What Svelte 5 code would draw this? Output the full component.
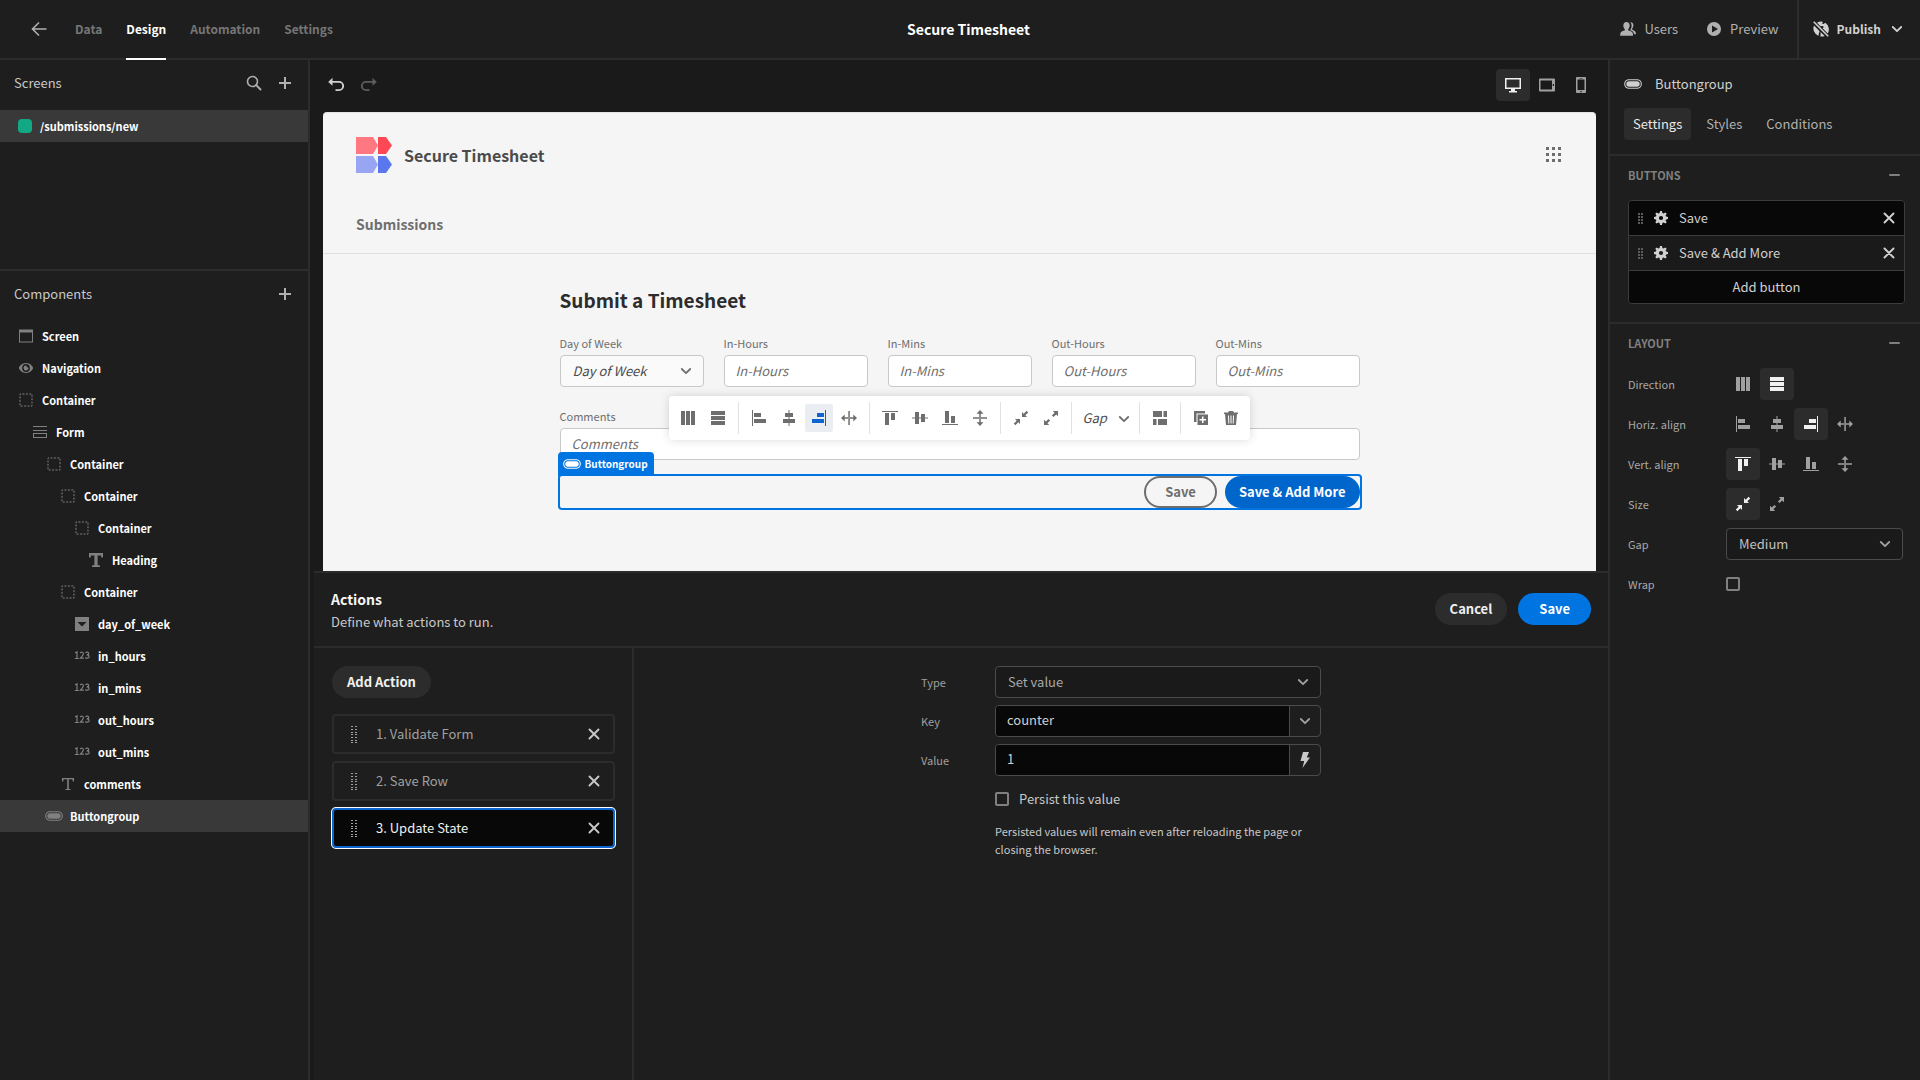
<script>
  const icons = {
    back: '<path d="M15.5 8H2M8 1.5 1.5 8 8 14.5" fill="none" stroke="currentColor" stroke-width="1.6"/>',
    search: '<circle cx="6.5" cy="6.5" r="5" fill="none" stroke="currentColor" stroke-width="1.6"/><path d="m10.2 10.2 4.3 4.3" stroke="currentColor" stroke-width="1.9" stroke-linecap="round"/>',
    plus: '<path d="M7 2h2v12H7zM2 7h12v2H2z"/>',
    minus: '<rect x="3" y="7" width="11" height="2" rx="1"/>',
    close: '<path d="m3.500 3.500 9 9m0-9-9 9" stroke="currentColor" stroke-width="1.900" stroke-linecap="round"/>',
    chevron: '<path d="m3.800 6 4.200 4.200L12.200 6" fill="none" stroke="currentColor" stroke-width="1.800" stroke-linecap="round" stroke-linejoin="round"/>',
    undo: '<path d="M4.500.8v3.100H11a5.100 5.100 0 0 1 0 10.200H7.500v-1.900H11a3.200 3.200 0 0 0 0-6.400H4.500v3L.2 4.900z"/>',
    redo: '<path d="M11.500.8v3.100H5a5.100 5.100 0 0 0 0 10.200h3.500v-1.900H5a3.200 3.200 0 0 1 0-6.400h6.500v3l4.300-3.900z"/>',
    users: '<path d="M6.500.9c2 0 3.200 1.500 3.200 3.600 0 1.500-.7 2.700-1.300 3.400-.5.700-.3 1.400.4 1.700 2.200.8 4.200 1.600 4.200 3.700v1.400H.2v-1.400c0-2.100 1.900-2.900 4-3.700.8-.3.900-1 .4-1.700-.6-.7-1.300-1.900-1.300-3.400C3.300 2.400 4.500.9 6.500.9z"/><path d="M10.200 1.200c1.700-.3 3.200 1 3.200 3.100 0 1.300-.5 2.300-1 3-.5.700-.3 1.400.3 1.700 1.800.8 3.200 1.600 3.200 3.600v.6h-1.800c-.3-2.200-2-3.300-4-4.100 1-1.300 1.500-2.700 1.500-4.600 0-1.300-.5-2.500-1.400-3.300z"/>',
    play: '<path fill-rule="evenodd" d="M8 1a7 7 0 1 1 0 14A7 7 0 0 1 8 1zM6 4.500v7l6-3.500z"/>',
    globe: '<path d="M4 1.700A7.600 7.600 0 0 1 8.400.4c1.600.1 1.300.9.900 1.600-.4.700.5 1.200 1.300.9.900-.3 1.300-1.200 2-.8a7.800 7.800 0 0 1 2.200 10.300L9.600 7.200c.6-.6 1.300-.9 1-1.500-.5-.9-2-.8-2.800-.2zM1 4.600l5.200 5.200c.5.600.3 1.300-.1 1.900-.4.800-.2 2.400-.8 3A7.700 7.700 0 0 1 1 4.600zm6.600 10.900c-.6-.8.100-1.900.1-2.700 0-.6-.3-1-.2-1.700l4.200 3.800a7.700 7.700 0 0 1-4.100.6z"/><path d="m.7.700 14.500 14.500" stroke="currentColor" stroke-width="1.600"/>',
    desktop: '<path fill-rule="evenodd" d="M0 1h16v11h-6v2h2v1.500H4V14h2v-2H0zm1.500 1.500v8h13v-8z"/>',
    tablet: '<path fill-rule="evenodd" d="M1 1.500h14a1 1 0 0 1 1 1v11a1 1 0 0 1-1 1H1a1 1 0 0 1-1-1v-11a1 1 0 0 1 1-1zm.5 2v9H13v-9zm12.300 3.500v2H15V7z"/>',
    phone: '<path fill-rule="evenodd" d="M4 0h8a1 1 0 0 1 1 1v14a1 1 0 0 1-1 1H4a1 1 0 0 1-1-1V1a1 1 0 0 1 1-1zm.5 2.500v10.500h7V2.500zM6.500.9v.7h3V.9zM7.300 14v1.200h1.400V14z"/>',
    grid: '<path d="M0 0h3v3H0zM6 0h3v3H6zM12 0h3v3h-3zM0 6h3v3H0zM6 6h3v3H6zM12 6h3v3h-3zM0 12h3v3H0zM6 12h3v3H6zM12 12h3v3h-3z"/>',
    screen: '<path fill-rule="evenodd" d="M1 1.500h14v13H1zM2 4.500v9h12v-9z"/>',
    eye: '<path fill-rule="evenodd" d="M8 3c3.800 0 7 3.200 7 5s-3.200 5-7 5-7-3.200-7-5 3.200-5 7-5zm0 1.100a3.900 3.900 0 1 0 0 7.800 3.900 3.900 0 0 0 0-7.800zM8 5.600c.5 0 .7.100.7.300-.5.700.5 1.900 1.600 1.400a2.400 2.400 0 1 1-2.300-1.700z"/>',
    container: '<path d="M2 2h12v12H2z" fill="none" stroke="currentColor" stroke-dasharray="2 1.430" stroke-dashoffset="1"/>',
    form: '<path fill-rule="evenodd" d="M1 2h14v1H1zM1 6h14v1H1zM1 9h14v5H1zm1 1v3h12v-3z"/>',
    heading: '<path d="M1 1h14v4.500h-1.600L13 3.500H9.600V13l2.400.6V15H4v-1.400l2.400-.6V3.500H3L2.600 5.500H1z"/>',
    text: '<path d="M2 2h12v3.500h-1.200L12.400 3.300H8.800v9.500l1.900.5V14H5.300v-.7l1.900-.5V3.300H3.600L3.200 5.500H2z"/>',
    picker: '<path fill-rule="evenodd" d="M1 1h14v14H1zm2.500 5L8 10.500 12.500 6z"/>',
    number: '<path d="M1 4.800 3 4v6.200M.8 10.500h4M6.200 5.200C7.400 3.700 9.500 4 9.400 5.700c0 1.300-1.600 2.900-3 4.500h3.400M11.500 4.800c1-1 3.300-.8 3.200.7 0 1-.9 1.400-2 1.400 1.300 0 2.400.5 2.400 1.700 0 1.900-2.700 2-3.800.9" fill="none" stroke="currentColor" stroke-width="1.200"/>',
    pill: '<rect x=".7" y="3.700" width="16.600" height="8.600" rx="4.300" fill="none" stroke="currentColor" stroke-width="1.100"/><rect x="2.300" y="5.200" width="13.400" height="5.600" rx="2.800"/>',
    gear: '<path fill-rule="evenodd" d="M7 1h2l.4 2 1.200.5L12.300 2.400l1.400 1.400-1.100 1.600.5 1.200 1.900.4v2l-1.900.4-.5 1.200 1.100 1.600-1.400 1.400-1.700-1.100-1.200.5L9 15H7l-.4-2-1.200-.5-1.700 1.100-1.400-1.400 1.100-1.600-.5-1.200L1 9V7l1.900-.4.5-1.200-1.100-1.600 1.400-1.400 1.700 1.100L6.600 3zM8 5.900a2.100 2.100 0 1 0 0 4.200 2.100 2.100 0 0 0 0-4.200z"/>',
    grip: '<path d="M0 0h2v2H0zM3 0h2v2H3zM0 3h2v2H0zM3 3h2v2H3zM0 6h2v2H0zM3 6h2v2H3zM0 9h2v2H0zM3 9h2v2H3z"/>',
    dots: '<path d="M0 0h2v1H0zM4 0h2v1H4zM0 3h2v1H0zM4 3h2v1H4zM0 6h2v1H0zM4 6h2v1H4zM0 8h2v1H0zM4 8h2v1H4zM0 11h2v1H0zM4 11h2v1H4zM0 14h2v1H0zM4 14h2v1H4zM0 16h2v1H0zM4 16h2v1H4z"/>',
    bolt: '<path d="M6 0h6L9.800 5.500H13L5.500 16l1.700-7H3.500z"/>',
    columns: '<path d="M1 1h4v14H1zM6 1h4v14H6zM11 1h4v14h-4z"/>',
    rows: '<path d="M1 1h14v4H1zM1 6h14v4H1zM1 11h14v4H1z"/>',
    left: '<path d="M1 0h1v16H1zM3 3h7v4H3zM3 9h12v4H3z"/>',
    center: '<path d="M7.500 0h1v16h-1zM4 3h8v4H4zM2 9h12v4H2z"/>',
    right: '<path d="M14 0h1v16h-1zM6 3h7v4H6zM1 9h12v4H1z"/>',
    spreadH: '<path d="M7.300 1h1.500v14H7.300zM3.700 4.500v2.800H7v1.500H3.700v2.700L0 8zM12.300 4.500 16 8l-3.700 3.500V8.800H9V7.300h3.300z"/>',
    top: '<path d="M0 1h16v1H0zM3 3h4v12H3zM9 3h4v7H9z"/>',
    middle: '<path d="M0 7.500h16v1H0zM3 2h4v12H3zM9 4h4v8H9z"/>',
    bottom: '<path d="M0 14h16v1H0zM3 1h4v12H3zM9 6h4v7H9z"/>',
    spreadV: '<path d="M1 7.300h14v1.500H1zM4.500 3.700 8 0l3.500 3.700H8.800V7H7.300V3.700zM4.500 12.300h2.800V9h1.500v3.300h2.700L8 16z"/>',
    shrink: '<path d="M9 7V2l1.700 1.700L13.600.8l1.600 1.600-2.900 2.900L14 7zM7 9v5l-1.700-1.700-2.900 2.900-1.600-1.600 2.900-2.900L2 9z"/>',
    grow: '<path d="M15 1v5.200l-1.800-1.800-2.700 2.700-1.600-1.600 2.700-2.700L9.800 1zM1 15V9.800l1.800 1.800 2.700-2.700 1.600 1.600-2.700 2.700L6.200 15z"/>',
    layout: '<path d="M1 1h9v6H1zM11.500 1H15v6h-3.500zM1 9h3.500v6H1zM6 9h9v6H6z"/>',
    duplicate: '<path d="M1 1h11v2.500H3.500V12H1z"/><path fill-rule="evenodd" d="M4.500 4.500H15V15H4.500zM9 6.500V9H6.500v1.500H9V13h1.500v-2.500H13V9h-2.500V6.500z"/>',
    trash: '<path fill-rule="evenodd" d="M6 1h4l1 1.500h4V4h-1l-1 11H3L2 4H1V2.500h4zM5 5.500l.3 8h1l-.3-8zm2.500 0v8h1v-8zm2.500 0-.3 8h1l.3-8z"/>',
  };

  const tabs = ['Data', 'Design', 'Automation', 'Settings'];
  const tree = [
    ['Screen', 'screen', 0], ['Navigation', 'eye', 0], ['Container', 'container', 0],
    ['Form', 'form', 1], ['Container', 'container', 2], ['Container', 'container', 3],
    ['Container', 'container', 4], ['Heading', 'heading', 5], ['Container', 'container', 3],
    ['day_of_week', 'picker', 4], ['in_hours', 'number', 4], ['in_mins', 'number', 4],
    ['out_hours', 'number', 4], ['out_mins', 'number', 4], ['comments', 'text', 3],
    ['Buttongroup', 'pill', 2],
  ];
  const fields = ['In-Hours', 'In-Mins', 'Out-Hours', 'Out-Mins'];
  const toolbarA = [['columns', 'rows'], ['left', 'center', 'right', 'spreadH'], ['top', 'middle', 'bottom', 'spreadV'], ['shrink', 'grow']];
  const toolbarB = [['layout'], ['duplicate', 'trash']];
  const settings = [
    ['Direction', ['columns', 'rows'], 'rows'],
    ['Horiz. align', ['left', 'center', 'right', 'spreadH'], 'right'],
    ['Vert. align', ['top', 'middle', 'bottom', 'spreadV'], 'top'],
    ['Size', ['shrink', 'grow'], 'shrink'],
  ];
  const actions = ['1. Validate Form', '2. Save Row', '3. Update State'];
</script>

{#snippet icon(name, w = 16, h = 16)}
  <svg class="icon" width={w} height={h} viewBox="0 0 {w} {h}" fill="currentColor" aria-hidden="true">{@html icons[name]}</svg>
{/snippet}

<div class="app">
  <header class="topbar">
    <div class="side">
      <button class="plain back" aria-label="Back">{@render icon('back')}</button>
      <nav class="tabs">
        {#each tabs as tab}
          <a href="#{tab}" class:active={tab === 'Design'}>{tab}</a>
        {/each}
      </nav>
    </div>
    <h1>Secure Timesheet</h1>
    <div class="side end">
      <button class="plain link">{@render icon('users')}Users</button>
      <button class="plain link">{@render icon('play')}Preview</button>
      <button class="plain publish">{@render icon('globe')}<span>Publish</span>{@render icon('chevron')}</button>
    </div>
  </header>

  <div class="body">
    <aside class="left">
      <section class="screens">
        <div class="panel-head">
          <h2>Screens</h2>
          <button class="plain" aria-label="Search screens">{@render icon('search')}</button>
          <button class="plain" aria-label="Add screen">{@render icon('plus')}</button>
        </div>
        <a class="screen-row" href="#new"><span class="dot"></span>/submissions/new</a>
      </section>
      <section class="components">
        <div class="panel-head">
          <h2>Components</h2>
          <button class="plain" aria-label="Add component">{@render icon('plus')}</button>
        </div>
        <ul class="tree">
          {#each tree as [label, glyph, depth]}
            <li class:selected={glyph === 'pill'} style="--depth: {depth}">
              <span class="tree-icon">{@render icon(glyph, glyph === 'pill' ? 18 : 16)}</span>{label}
            </li>
          {/each}
        </ul>
      </section>
    </aside>

    <main>
      <div class="canvas-bar">
        <button class="plain undo" aria-label="Undo">{@render icon('undo')}</button>
        <button class="plain redo" aria-label="Redo" disabled>{@render icon('redo')}</button>
        <div class="devices">
          <button class="tile active" aria-label="Desktop">{@render icon('desktop')}</button>
          <button class="tile" aria-label="Tablet">{@render icon('tablet')}</button>
          <button class="tile" aria-label="Mobile">{@render icon('phone')}</button>
        </div>
      </div>

      <div class="preview">
        <div class="site-head">
          <svg width="36" height="36" viewBox="0 0 36 36" aria-hidden="true">
            <path fill="#ff7780" d="M0 0h17l5 8.500L17 17H0z" />
            <path fill="#ff4855" d="M22 0h8l6 8.500L30 17h-8z" />
            <path fill="#97a5f2" d="M0 19h17l5 8.500L17 36H0z" />
            <path fill="#5a77ee" d="M22 19h8l6 8.500L30 36h-8z" />
          </svg>
          <span class="site-title">Secure Timesheet</span>
          <button class="plain apps" aria-label="Apps">{@render icon('grid', 15, 15)}</button>
        </div>
        <nav class="site-nav"><a href="#submissions">Submissions</a></nav>
        <form class="sheet" onsubmit={(e) => e.preventDefault()}>
          <h2>Submit a Timesheet</h2>
          <div class="fields">
            <div class="field">
              <label for="day">Day of Week</label>
              <div class="select">
                <select id="day"><option>Day of Week</option></select>
                {@render icon('chevron')}
              </div>
            </div>
            {#each fields as name}
              <div class="field">
                <label for={name}>{name}</label>
                <input id={name} type="text" placeholder={name} />
              </div>
            {/each}
          </div>
          <div class="field comments">
            <label for="comments">Comments</label>
            <input id="comments" type="text" placeholder="Comments" />
            <div class="toolbar" role="toolbar">
              {#each toolbarA as group}
                {#each group as name}
                  <button type="button" class:on={name === 'right'} aria-label={name}>{@render icon(name)}</button>
                {/each}
                <span class="rule"></span>
              {/each}
              <div class="gap-select">
                <select aria-label="Gap"><option>Gap</option></select>
                {@render icon('chevron')}
              </div>
              {#each toolbarB as group}
                <span class="rule"></span>
                {#each group as name}
                  <button type="button" aria-label={name}>{@render icon(name)}</button>
                {/each}
              {/each}
            </div>
          </div>
          <div class="button-group">
            <span class="tag">{@render icon('pill', 18)}Buttongroup</span>
            <button class="pill outline">Save</button>
            <button class="pill primary">Save &amp; Add More</button>
          </div>
        </form>
      </div>

      <section class="drawer">
        <div class="drawer-head">
          <div>
            <h3>Actions</h3>
            <p>Define what actions to run.</p>
          </div>
          <button class="pill dark">Cancel</button>
          <button class="pill blue">Save</button>
        </div>
        <div class="drawer-body">
          <div class="action-list">
            <button class="pill dark">Add Action</button>
            <ol>
              {#each actions as action, i}
                <li class:current={i === 2}>
                  <span class="drag">{@render icon('dots', 6, 17)}</span>
                  <span class="name">{action}</span>
                  <button class="plain" aria-label="Remove">{@render icon('close')}</button>
                </li>
              {/each}
            </ol>
          </div>
          <div class="action-form">
            <div class="form-grid">
              <label for="type">Type</label>
              <div class="select dark-select">
                <select id="type"><option>Set value</option></select>
                {@render icon('chevron')}
              </div>
              <label for="key">Key</label>
              <div class="combo">
                <input id="key" type="text" value="counter" />
                <button aria-label="Choose key">{@render icon('chevron')}</button>
              </div>
              <label for="value">Value</label>
              <div class="combo">
                <input id="value" type="text" value="1" />
                <button class="bright" aria-label="Bindings">{@render icon('bolt')}</button>
              </div>
              <label class="persist"><input type="checkbox" />Persist this value</label>
              <p>Persisted values will remain even after reloading the page or closing the browser.</p>
            </div>
          </div>
        </div>
      </section>
    </main>

    <aside class="right">
      <div class="right-head">
        <div class="component-name">{@render icon('pill', 18)}Buttongroup</div>
        <div class="right-tabs">
          <button class="active">Settings</button>
          <button>Styles</button>
          <button>Conditions</button>
        </div>
      </div>
      <section class="buttons-section">
        <div class="section-title"><h4>Buttons</h4>{@render icon('minus')}</div>
        <ul class="button-list">
          {#each ['Save', 'Save & Add More'] as name}
            <li>
              <span class="grip">{@render icon('grip', 5, 11)}</span>
              {@render icon('gear')}
              <span class="name">{name}</span>
              <button class="plain" aria-label="Remove {name}">{@render icon('close')}</button>
            </li>
          {/each}
          <li class="add"><button>Add button</button></li>
        </ul>
      </section>
      <section>
        <div class="section-title"><h4>Layout</h4>{@render icon('minus')}</div>
        <div class="settings">
          {#each settings as [label, options, chosen]}
            <span class="setting-label">{label}</span>
            <div class="tiles" role="group" aria-label={label}>
              {#each options as name}
                <button class="tile" class:active={name === chosen} aria-label={name}>{@render icon(name)}</button>
              {/each}
            </div>
          {/each}
          <label for="gap">Gap</label>
          <div class="select dark-select">
            <select id="gap"><option>Medium</option></select>
            {@render icon('chevron')}
          </div>
          <label for="wrap">Wrap</label>
          <input id="wrap" type="checkbox" />
        </div>
      </section>
    </aside>
  </div>
</div>

<style>
  :global(body) { background: #1a1a1a; }
  .app, .app * { box-sizing: border-box; }
  .app {
    display: flex;
    flex-direction: column;
    min-height: 100vh;
    font: 13px/18px "Noto Sans CJK SC", "Source Sans Pro", sans-serif;
    color: #c8c8c8;
  }
  h1, h2, h3, h4, p, ul, ol { margin: 0; padding: 0; list-style: none; }
  button, input, select { font: inherit; color: inherit; margin: 0; padding: 0; }
  button { border: 0; background: none; }
  a { color: inherit; text-decoration: none; }
  .icon { display: block; flex: none; }
  .plain { display: flex; align-items: center; }

  .topbar {
    display: grid;
    grid-template-columns: 1fr auto 1fr;
    height: 60px;
    padding-left: 17px;
    background: #1e1e1e;
    border-bottom: 2px solid #2c2c2c;
  }
  .side { display: flex; align-items: stretch; }
  .end { justify-content: flex-end; }
  .back { padding: 0 28px 0 14px; color: #b0b0b0; }
  .tabs { display: flex; gap: 24px; font-size: 12px; font-weight: 700; color: #767676; }
  .tabs a { display: flex; align-items: center; margin-bottom: -2px; border-bottom: 2px solid transparent; }
  .tabs a.active { color: #fff; border-color: #fff; }
  h1 { font-size: 14px; font-weight: 700; align-self: center; color: #fff; }
  .link { gap: 8px; margin-right: 28px; color: #b0b0b0; }
  .link + .publish { margin-left: -10px; }
  .publish { gap: 8px; padding: 0 15px 0 14px; border-left: 2px solid #2c2c2c; font-size: 12px; font-weight: 700; color: #d0d0d0; }

  .body { display: grid; grid-template-columns: 310px minmax(0, 1fr) 312px; flex: 1; }
  .left { background: #1e1e1e; border-right: 2px solid #2c2c2c; }
  .right { background: #1e1e1e; border-left: 2px solid #2c2c2c; }
  .screens { height: 211px; border-bottom: 2px solid #2c2c2c; }
  .panel-head { display: flex; align-items: center; gap: 15px; height: 46px; padding: 0 15px 0 14px; margin-bottom: 4px; color: #b0b0b0; }
  .panel-head h2 { flex: 1; font-size: 13px; font-weight: 400; color: #c8c8c8; }
  .screen-row { display: flex; align-items: center; gap: 8px; height: 32px; padding-left: 18px; background: #393939; color: #fff; font-size: 11px; font-weight: 700; }
  .dot { width: 14px; height: 14px; border-radius: 4px; background: #12a883; }
  .tree { font-size: 11px; font-weight: 700; color: #fff; }
  .components .panel-head { margin-bottom: 3px; }
  .tree li { display: flex; align-items: center; gap: 8px; height: 32px; padding-left: calc(18px + var(--depth) * 14px); }
  .tree li.selected { background: #393939; }
  .tree-icon { display: flex; justify-content: center; width: 16px; color: #808080; }

  main { display: flex; flex-direction: column; min-width: 0; background: #1a1a1a; }
  .canvas-bar { display: flex; align-items: center; gap: 17px; height: 52px; padding: 0 10px 2px 18px; }
  .undo { color: #d0d0d0; }
  .redo { color: #5c5c5c; }
  .devices { display: flex; margin-left: auto; }
  .tile { display: flex; align-items: center; justify-content: center; width: 34px; height: 32px; border-radius: 4px; color: #a0a0a0; }
  .tile.active { background: #2c2c2c; color: #f0f0f0; }

  .preview { height: 459px; margin: 0 12px 0 13px; border-radius: 4px 4px 0 0; background: #f5f5f5; color: #6e6e6e; border-top: 1px solid #e4e4e4; }
  .site-head { display: flex; align-items: center; gap: 12px; height: 83px; padding: 0 35px 0 33px; }
  .site-title { flex: 1; font-size: 16px; line-height: 24px; font-weight: 700; color: #4b4b4b; }
  .site-nav { display: flex; align-items: center; height: 58px; padding: 0 33px 2px; border-bottom: 1px solid #e1e1e1; font-size: 14px; font-weight: 700; }
  .sheet { width: 800px; margin: 0 auto; padding-top: 32px; max-width: 100%; }
  .sheet h2 { font-size: 19px; line-height: 28px; font-weight: 700; color: #2c2c2c; }
  .fields { display: grid; grid-template-columns: repeat(5, 1fr); gap: 20px; margin-top: 17px; }
  .field { display: flex; flex-direction: column; min-width: 0; font-size: 11px; }
  .field label { height: 24px; line-height: 24px; }
  .field input, .select select { height: 32px; width: 100%; border: 1px solid #c8c8c8; border-radius: 4px; background: #fff; padding: 0 11px; font-size: 13px; }
  .field input { padding-bottom: 2px; }
  .field input::placeholder { color: #6e6e6e; font-style: italic; opacity: 1; }
  .select { position: relative; }
  .select select { appearance: none; background: #fafafa; padding-left: 12px; font-style: italic; color: #4b4b4b; }
  .select .icon { position: absolute; right: 10px; top: 8px; pointer-events: none; }
  .comments { position: relative; margin-top: 17px; }
  .toolbar {
    position: absolute; top: -8px; left: 109px; z-index: 1;
    display: flex; align-items: center; gap: 2px; height: 44px; padding: 0 5px;
    border-radius: 4px; background: #fff; box-shadow: 0 0 10px rgba(0, 0, 0, .15);
  }
  .toolbar button { display: flex; align-items: center; justify-content: center; width: 28px; height: 28px; border-radius: 2px; }
  .toolbar button.on { background: #eaeef2; color: #0d66d0; }
  .rule { width: 1px; height: 32px; margin: 0 4px; background: #e1e1e1; }
  .gap-select { position: relative; width: 55px; font-size: 13px; }
  .gap-select select { appearance: none; width: 100%; padding-left: 5px; border: 0; background: none; font-style: italic; color: #4b4b4b; }
  .gap-select .icon { position: absolute; right: 1px; top: 2px; pointer-events: none; }
  .button-group {
    position: relative; display: flex; justify-content: flex-end; gap: 8px; margin-top: 16px;
    border-radius: 2px; box-shadow: 0 0 0 2px #0074e0;
  }
  .tag {
    position: absolute; left: -2px; bottom: 100%; display: flex; align-items: center; gap: 4px;
    height: 24px; padding: 0 6px 0 5px; border-radius: 4px 4px 0 0;
    background: #0074e0; color: #fff; font-size: 10px; font-weight: 700;
  }
  .pill { height: 32px; padding: 0 14px; border-radius: 16px; font-weight: 700; }
  .outline { border: 2px solid #6e6e6e; padding: 0 19px; }
  .primary { background: #0066cc; color: #fff; }
  .dark { background: #2c2c2c; color: #f0f0f0; padding: 0 15px; }
  .blue { background: #0074e0; color: #fff; padding: 0 21px; }

  .drawer { display: flex; flex-direction: column; flex: 1; margin-left: 4px; background: #1e1e1e; border-top: 2px solid #2c2c2c; }
  .drawer-head { display: flex; align-items: center; gap: 11px; height: 75px; padding: 0 17px 1px; border-bottom: 2px solid #2c2c2c; }
  .drawer-head > div { flex: 1; padding-bottom: 3px; }
  h3 { font-size: 14px; line-height: 28px; font-weight: 700; color: #f5f5f5; }
  .drawer-body { display: grid; grid-template-columns: 320px 1fr; flex: 1; }
  .action-list { padding: 18px 17px 0 18px; border-right: 2px solid #2c2c2c; }
  .action-list ol { display: grid; gap: 7px; margin-top: 16px; }
  .action-list li { display: flex; align-items: center; height: 40px; padding: 0 11px 0 17px; border: 2px solid #2c2c2c; border-radius: 4px; color: #a0a0a0; }
  .action-list .name { flex: 1; padding-left: 19px; }
  .action-list li .plain { color: #c8c8c8; }
  .action-list li.current { background: #080808; color: #f0f0f0; border-color: #0d66d0; box-shadow: 0 0 0 1px #fff; }
  .drag { color: #a0a0a0; }
  .action-form { display: flex; justify-content: center; padding-top: 18px; }
  .form-grid { display: grid; grid-template-columns: 60px 1fr; gap: 7px 14px; align-content: start; align-items: center; width: 400px; }
  .form-grid > label { font-size: 11px; color: #a0a0a0; }
  .dark-select select, .form-grid .dark-select select { border-color: #4b4b4b; background: #1a1a1a; font-style: normal; color: #a8a8a8; }
  .dark-select .icon { color: #a0a0a0; }
  .combo { display: flex; height: 32px; border: 1px solid #4b4b4b; border-radius: 4px; overflow: hidden; }
  .combo input { flex: 1; min-width: 0; border: 0; background: #080808; padding: 0 11px 2px; color: #d0d0d0; }
  .combo button { display: flex; align-items: center; justify-content: center; width: 31px; border-left: 1px solid #4b4b4b; color: #a0a0a0; }
  .combo .bright { color: #c8c8c8; }
  .form-grid .persist { grid-column: 2; display: flex; align-items: center; gap: 10px; height: 32px; font-size: 13px; color: #c8c8c8; }
  .form-grid p { grid-column: 2; font-size: 11px; color: #c8c8c8; }
  input[type='checkbox'] { appearance: none; width: 14px; height: 14px; border: 2px solid #808080; border-radius: 2px; }

  .right-head { height: 96px; padding: 10px 14px 0; border-bottom: 2px solid #2c2c2c; }
  .component-name { display: flex; align-items: center; gap: 13px; height: 28px; color: #d0d0d0; }
  .right-tabs { display: flex; gap: 6px; margin-top: 10px; }
  .right-tabs button { height: 32px; padding: 0 9px; border-radius: 4px; color: #b0b0b0; }
  .right-tabs button.active { background: #2c2c2c; color: #e8e8e8; }
  .right section { padding: 0 17px 0 18px; }
  .section-title { display: flex; align-items: center; justify-content: space-between; height: 38px; color: #808080; }
  .section-title .icon { margin-right: 1px; }
  h4 { font-size: 11px; font-weight: 700; text-transform: uppercase; }
  .right .buttons-section { height: 168px; padding-right: 15px; border-bottom: 2px solid #2c2c2c; }
  .buttons-section .section-title { padding-right: 2px; }
  .button-list { margin-top: 6px; border: 1px solid #3c3c3c; border-radius: 4px; overflow: hidden; color: #d0d0d0; }
  .button-list li { display: flex; align-items: center; height: 35px; padding: 0 7px 0 9px; border-bottom: 1px solid #3c3c3c; background: #080808; }
  .button-list li:nth-child(2) { background: #1a1a1a; }
  .button-list .name { flex: 1; padding-left: 10px; }
  .button-list .grip { padding-right: 10px; color: #5c5c5c; }
  .button-list .add { height: 32px; padding: 0 8px; border: 0; }
  .add button { flex: 1; height: 100%; }
  .settings { display: grid; grid-template-columns: 98px 1fr; row-gap: 8px; align-items: center; margin-top: 6px; font-size: 11px; color: #a8a8a8; }
  .tiles { display: flex; }
  .settings .dark-select select { color: #c0c0c0; }
  .settings > input { margin: 9px 0; }
</style>
